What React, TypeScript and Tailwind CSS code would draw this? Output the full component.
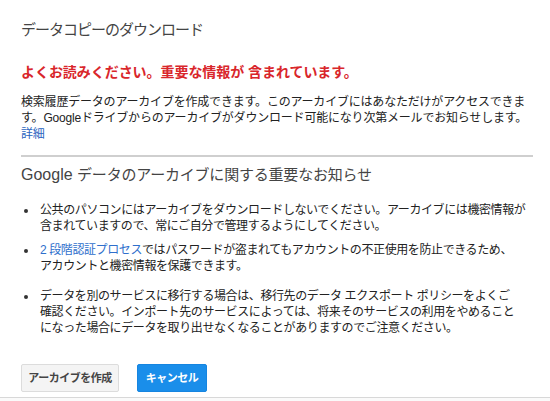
import React from "react";

const font = { fontFamily: '"Liberation Sans", "Noto Sans CJK JP", sans-serif' };

function Bullet({ children, className = "" }: { children: React.ReactNode; className?: string }) {
  return (
    <li className={"flex " + className}>
      <div className="w-[19px] shrink-0 flex pt-[7px] pl-[3px]">
        <div className="w-[4px] h-[4px] rounded-full bg-[#333]" />
      </div>
      <div className="whitespace-nowrap text-[12px] leading-[16px] tracking-[-0.4px] text-[#222]">{children}</div>
    </li>
  );
}

export default function App() {
  return (
    <div style={font} className="w-[550px] h-[401px] bg-white overflow-hidden flex flex-col">
      <div className="flex-1 pl-[21px] pr-[17px] flex flex-col">
        <h1 className="pt-[20px] text-[15px] leading-[20px] tracking-[-1px] text-[#444] font-normal whitespace-nowrap">
          データコピーのダウンロード
        </h1>
        <p className="mt-[22px] text-[14px] leading-[20px] font-bold tracking-[-0.05px] text-[#d9262b] whitespace-nowrap">
          よくお読みください。重要な情報が 含まれています。
        </p>
        <p className="mt-[12px] text-[12px] leading-[16px] tracking-[-0.2px] text-[#222] whitespace-nowrap">
          検索履歴データのアーカイブを作成できます。このアーカイブにはあなただけがアクセスできま
          <br />
          す。Googleドライブからのアーカイブがダウンロード可能になり次第メールでお知らせします。
          <br />
          <a className="text-[#2a64c0]">詳細</a>
        </p>
        <div className="mt-[13px] h-[2px] bg-[#cfcfcf] w-[512px]" />
        <h2 className="mt-[7px] text-[16px] leading-[22px] text-[#444] font-normal whitespace-nowrap">
          Google <span className="text-[15px] tracking-[-0.2px]">データのアーカイブに関する重要なお知らせ</span>
        </h2>
        <ul className="mt-[16px] flex flex-col">
          <Bullet>
            公共のパソコンにはアーカイブをダウンロードしないでください。アーカイブには機密情報が
            <br />
            含まれていますので、常にご自分で管理するようにしてください。
          </Bullet>
          <Bullet className="mt-[8px]">
            <a className="text-[#2f6fcc]">2 段階認証プロセス</a>ではパスワードが盗まれてもアカウントの不正使用を防止できるため、
            <br />
            アカウントと機密情報を保護できます。
          </Bullet>
          <Bullet className="mt-[14px]">
            データを別のサービスに移行する場合は、移行先のデータ エクスポート ポリシーをよくご
            <br />
            確認ください。インポート先のサービスによっては、将来そのサービスの利用をやめること
            <br />
            になった場合にデータを取り出せなくなることがありますのでご注意ください。
          </Bullet>
        </ul>
        <div className="mt-[28px] flex gap-[18px]">
          <button className="w-[98px] h-[28px] rounded-[2px] border border-[#dcdcdc] bg-[#f4f4f4] text-[11px] font-bold tracking-[-0.5px] text-[#444] flex items-center justify-center">
            アーカイブを作成
          </button>
          <button className="w-[70px] h-[28px] rounded-[2px] border border-[#1685e0] bg-[#1a8eea] text-[11px] font-bold tracking-[-0.5px] text-white flex items-center justify-center">
            キャンセル
          </button>
        </div>
      </div>
      <div className="h-[4px] border-t border-[#d8d8d8] bg-[#fafafa]" />
    </div>
  );
}
